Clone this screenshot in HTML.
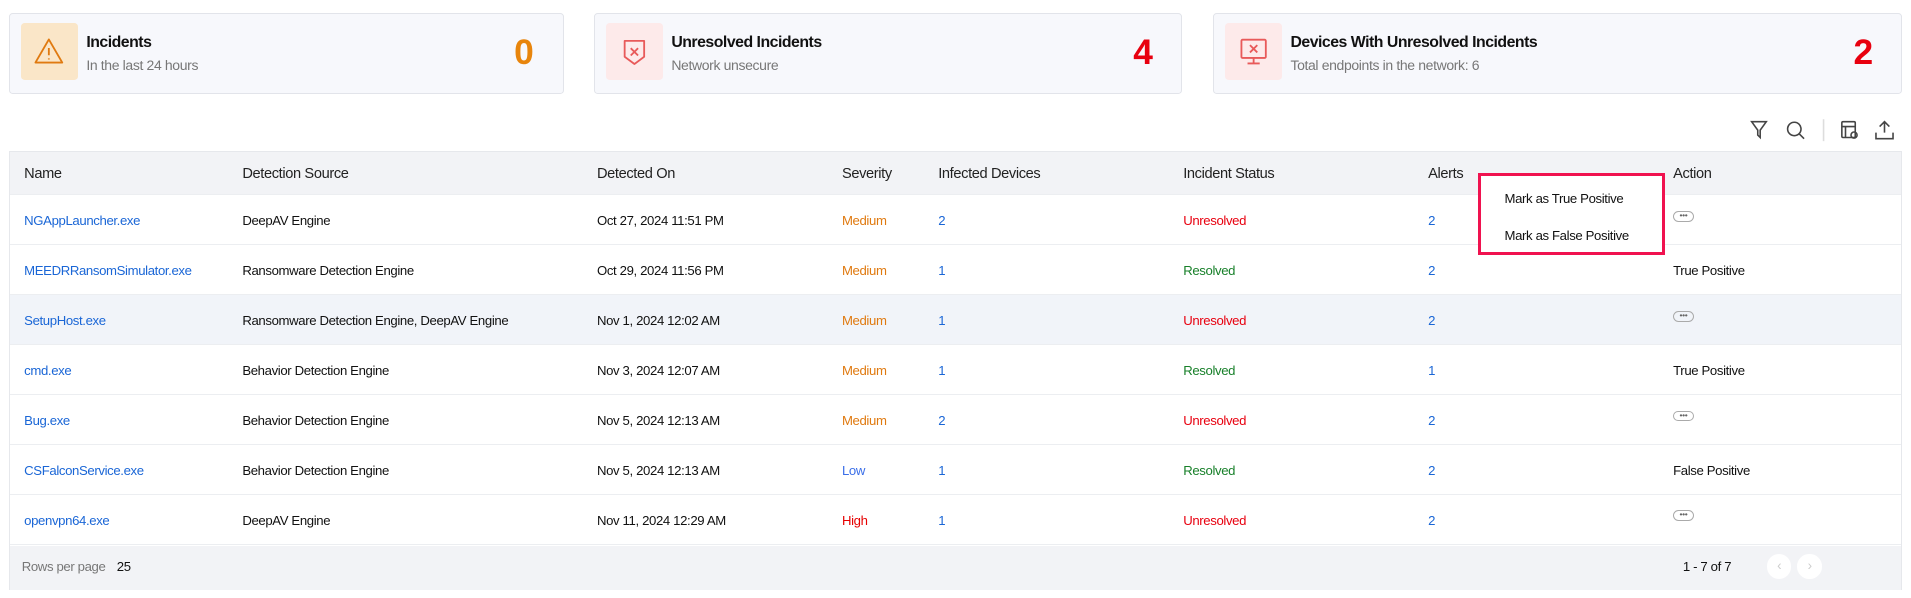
<!DOCTYPE html>
<html><head><meta charset="utf-8"><style>
*{box-sizing:border-box;margin:0;padding:0}
html,body{width:1911px;height:598px;overflow:hidden;background:#fff}
#w{zoom:1.21875;width:1568px;height:491px;position:relative;font-family:"Liberation Sans",sans-serif;color:#111}
.card{position:absolute;top:11px;height:66px;background:#f7f8fc;border:1px solid #e2e4ea;border-radius:3px}
.ib{position:absolute;left:9px;top:7px;width:47px;height:47px;border-radius:3px;display:flex;align-items:center;justify-content:center}
.ct{position:absolute;left:63px;top:16px;font-size:13px;font-weight:bold;letter-spacing:-.4px}
.cs{position:absolute;left:63px;top:35px;font-size:11.5px;color:#777;letter-spacing:-.3px}
.num{position:absolute;top:15px;font-size:29px;font-weight:bold}
.tbl{position:absolute;left:7px;top:124px;width:1554px;height:360px;border:1px solid #e6e8ec}
.row{position:absolute;left:0;width:1552px;height:41px;border-bottom:1px solid #eceef1;font-size:10.8px;letter-spacing:-.3px}
.row span{position:absolute;top:15px}
.hd{top:0;height:35px;background:#f2f3f6;font-size:12px}
.hd span{top:11px;color:#222}
.a{color:#1a66d6}.m{color:#e07a10}.u{color:#e8000f}.r{color:#18802a}.l{color:#3a6ee8}.h{color:#e60000}
.dots{position:absolute;width:17px;height:9px;border:1px solid #aaa;border-radius:5px;font-size:7px;line-height:5px;text-align:center;color:#666}
</style></head><body><div id="w">
<div class="card" style="left:7px;width:456px">
 <div class="ib" style="background:#fae6c8"><svg width="26" height="24" viewBox="0 0 26 24"><path d="M13 2 L24 21 H2 Z" fill="none" stroke="#e07a10" stroke-width="1.5" stroke-linejoin="round"/><path d="M13 9v6M13 17.5v1" stroke="#e07a10" stroke-width="1.5"/></svg></div>
 <div class="ct">Incidents</div><div class="cs">In the last 24 hours</div>
 <div class="num" style="left:414px;color:#e8850c">0</div></div>
<div class="card" style="left:487px;width:483px">
 <div class="ib" style="background:#fdeaea"><svg width="22" height="26" viewBox="0 0 22 26"><path d="M3 4h16v13l-8 6-8-6z" fill="none" stroke="#e85a5a" stroke-width="1.5" stroke-linejoin="round"/><path d="M8 10l6 6M14 10l-6 6" stroke="#e85a5a" stroke-width="1.5"/></svg></div>
 <div class="ct">Unresolved Incidents</div><div class="cs">Network unsecure</div>
 <div class="num" style="left:442px;color:#e8000f">4</div></div>
<div class="card" style="left:995px;width:566px">
 <div class="ib" style="background:#fdeaea"><svg width="24" height="26" viewBox="0 0 24 26"><rect x="2" y="3" width="20" height="15" rx="1" fill="none" stroke="#e85a5a" stroke-width="1.5"/><path d="M12 18v4M7 22.5h10M9 7.5l6 6M15 7.5l-6 6" stroke="#e85a5a" stroke-width="1.5"/></svg></div>
 <div class="ct">Devices With Unresolved Incidents</div><div class="cs">Total endpoints in the network: 6</div>
 <div class="num" style="left:525px;color:#e8000f">2</div></div>
<svg style="position:absolute;left:1434px;top:97px" width="130" height="20" viewBox="0 0 130 20" fill="none" stroke="#444" stroke-width="1.3">
<path d="M3 3h12l-5 7v6l-2-2v-4z"/><circle cx="38" cy="9" r="5.5"/><path d="M42 13l4 4"/><path d="M62 1v18" stroke="#ddd"/>
<rect x="77" y="3" width="11" height="13" rx="1"/><path d="M77 7h11M80 7v9"/><circle cx="87" cy="14" r="2.5"/>
<path d="M112 12V3M108 7l4-4 4 4M105 12v5h14v-5"/></svg>
<div class="tbl">
<div class="row hd"><span style="left:12px">Name</span><span style="left:191px">Detection Source</span><span style="left:482px">Detected On</span><span style="left:683px">Severity</span><span style="left:762px">Infected Devices</span><span style="left:963px">Incident Status</span><span style="left:1164px">Alerts</span><span style="left:1365px">Action</span></div>
<div class="row" style="top:35px"><span class="a" style="left:12px">NGAppLauncher.exe</span><span style="left:191px">DeepAV Engine</span><span style="left:482px">Oct 27, 2024 11:51 PM</span><span class="m" style="left:683px">Medium</span><span class="a" style="left:762px">2</span><span class="u" style="left:963px">Unresolved</span><span class="a" style="left:1164px">2</span><div class="dots" style="left:1365px;top:13px">•••</div></div>
<div class="row" style="top:76px"><span class="a" style="left:12px">MEEDRRansomSimulator.exe</span><span style="left:191px">Ransomware Detection Engine</span><span style="left:482px">Oct 29, 2024 11:56 PM</span><span class="m" style="left:683px">Medium</span><span class="a" style="left:762px">1</span><span class="r" style="left:963px">Resolved</span><span class="a" style="left:1164px">2</span><span style="left:1365px">True Positive</span></div>
<div class="row" style="top:117px;background:#f1f4f9"><span class="a" style="left:12px">SetupHost.exe</span><span style="left:191px">Ransomware Detection Engine, DeepAV Engine</span><span style="left:482px">Nov 1, 2024 12:02 AM</span><span class="m" style="left:683px">Medium</span><span class="a" style="left:762px">1</span><span class="u" style="left:963px">Unresolved</span><span class="a" style="left:1164px">2</span><div class="dots" style="left:1365px;top:13px">•••</div></div>
<div class="row" style="top:158px"><span class="a" style="left:12px">cmd.exe</span><span style="left:191px">Behavior Detection Engine</span><span style="left:482px">Nov 3, 2024 12:07 AM</span><span class="m" style="left:683px">Medium</span><span class="a" style="left:762px">1</span><span class="r" style="left:963px">Resolved</span><span class="a" style="left:1164px">1</span><span style="left:1365px">True Positive</span></div>
<div class="row" style="top:199px"><span class="a" style="left:12px">Bug.exe</span><span style="left:191px">Behavior Detection Engine</span><span style="left:482px">Nov 5, 2024 12:13 AM</span><span class="m" style="left:683px">Medium</span><span class="a" style="left:762px">2</span><span class="u" style="left:963px">Unresolved</span><span class="a" style="left:1164px">2</span><div class="dots" style="left:1365px;top:13px">•••</div></div>
<div class="row" style="top:240px"><span class="a" style="left:12px">CSFalconService.exe</span><span style="left:191px">Behavior Detection Engine</span><span style="left:482px">Nov 5, 2024 12:13 AM</span><span class="l" style="left:683px">Low</span><span class="a" style="left:762px">1</span><span class="r" style="left:963px">Resolved</span><span class="a" style="left:1164px">2</span><span style="left:1365px">False Positive</span></div>
<div class="row" style="top:281px"><span class="a" style="left:12px">openvpn64.exe</span><span style="left:191px">DeepAV Engine</span><span style="left:482px">Nov 11, 2024 12:29 AM</span><span class="h" style="left:683px">High</span><span class="a" style="left:762px">1</span><span class="u" style="left:963px">Unresolved</span><span class="a" style="left:1164px">2</span><div class="dots" style="left:1365px;top:13px">•••</div></div>
<div class="row" style="top:323px;height:36px;background:#f2f3f6;border:0"><span style="left:10px;top:11px;color:#777">Rows per page</span><span style="left:88px;top:11px">25</span><span style="left:1373px;top:11px">1 - 7 of 7</span>
<div style="position:absolute;left:1442px;top:7px;width:20px;height:20px;border-radius:50%;background:#fff;color:#ccc;font-size:11px;text-align:center;line-height:20px">‹</div>
<div style="position:absolute;left:1467px;top:7px;width:20px;height:20px;border-radius:50%;background:#fff;color:#ccc;font-size:11px;text-align:center;line-height:20px">›</div></div>
</div>
<div style="position:absolute;left:1213px;top:142px;width:153px;height:67px;background:#fff;border:3px solid #f0124f;font-size:10.8px;letter-spacing:-.3px">
<div style="position:absolute;left:19px;top:12px">Mark as True Positive</div><div style="position:absolute;left:19px;top:43px">Mark as False Positive</div></div>
</div></body></html>
